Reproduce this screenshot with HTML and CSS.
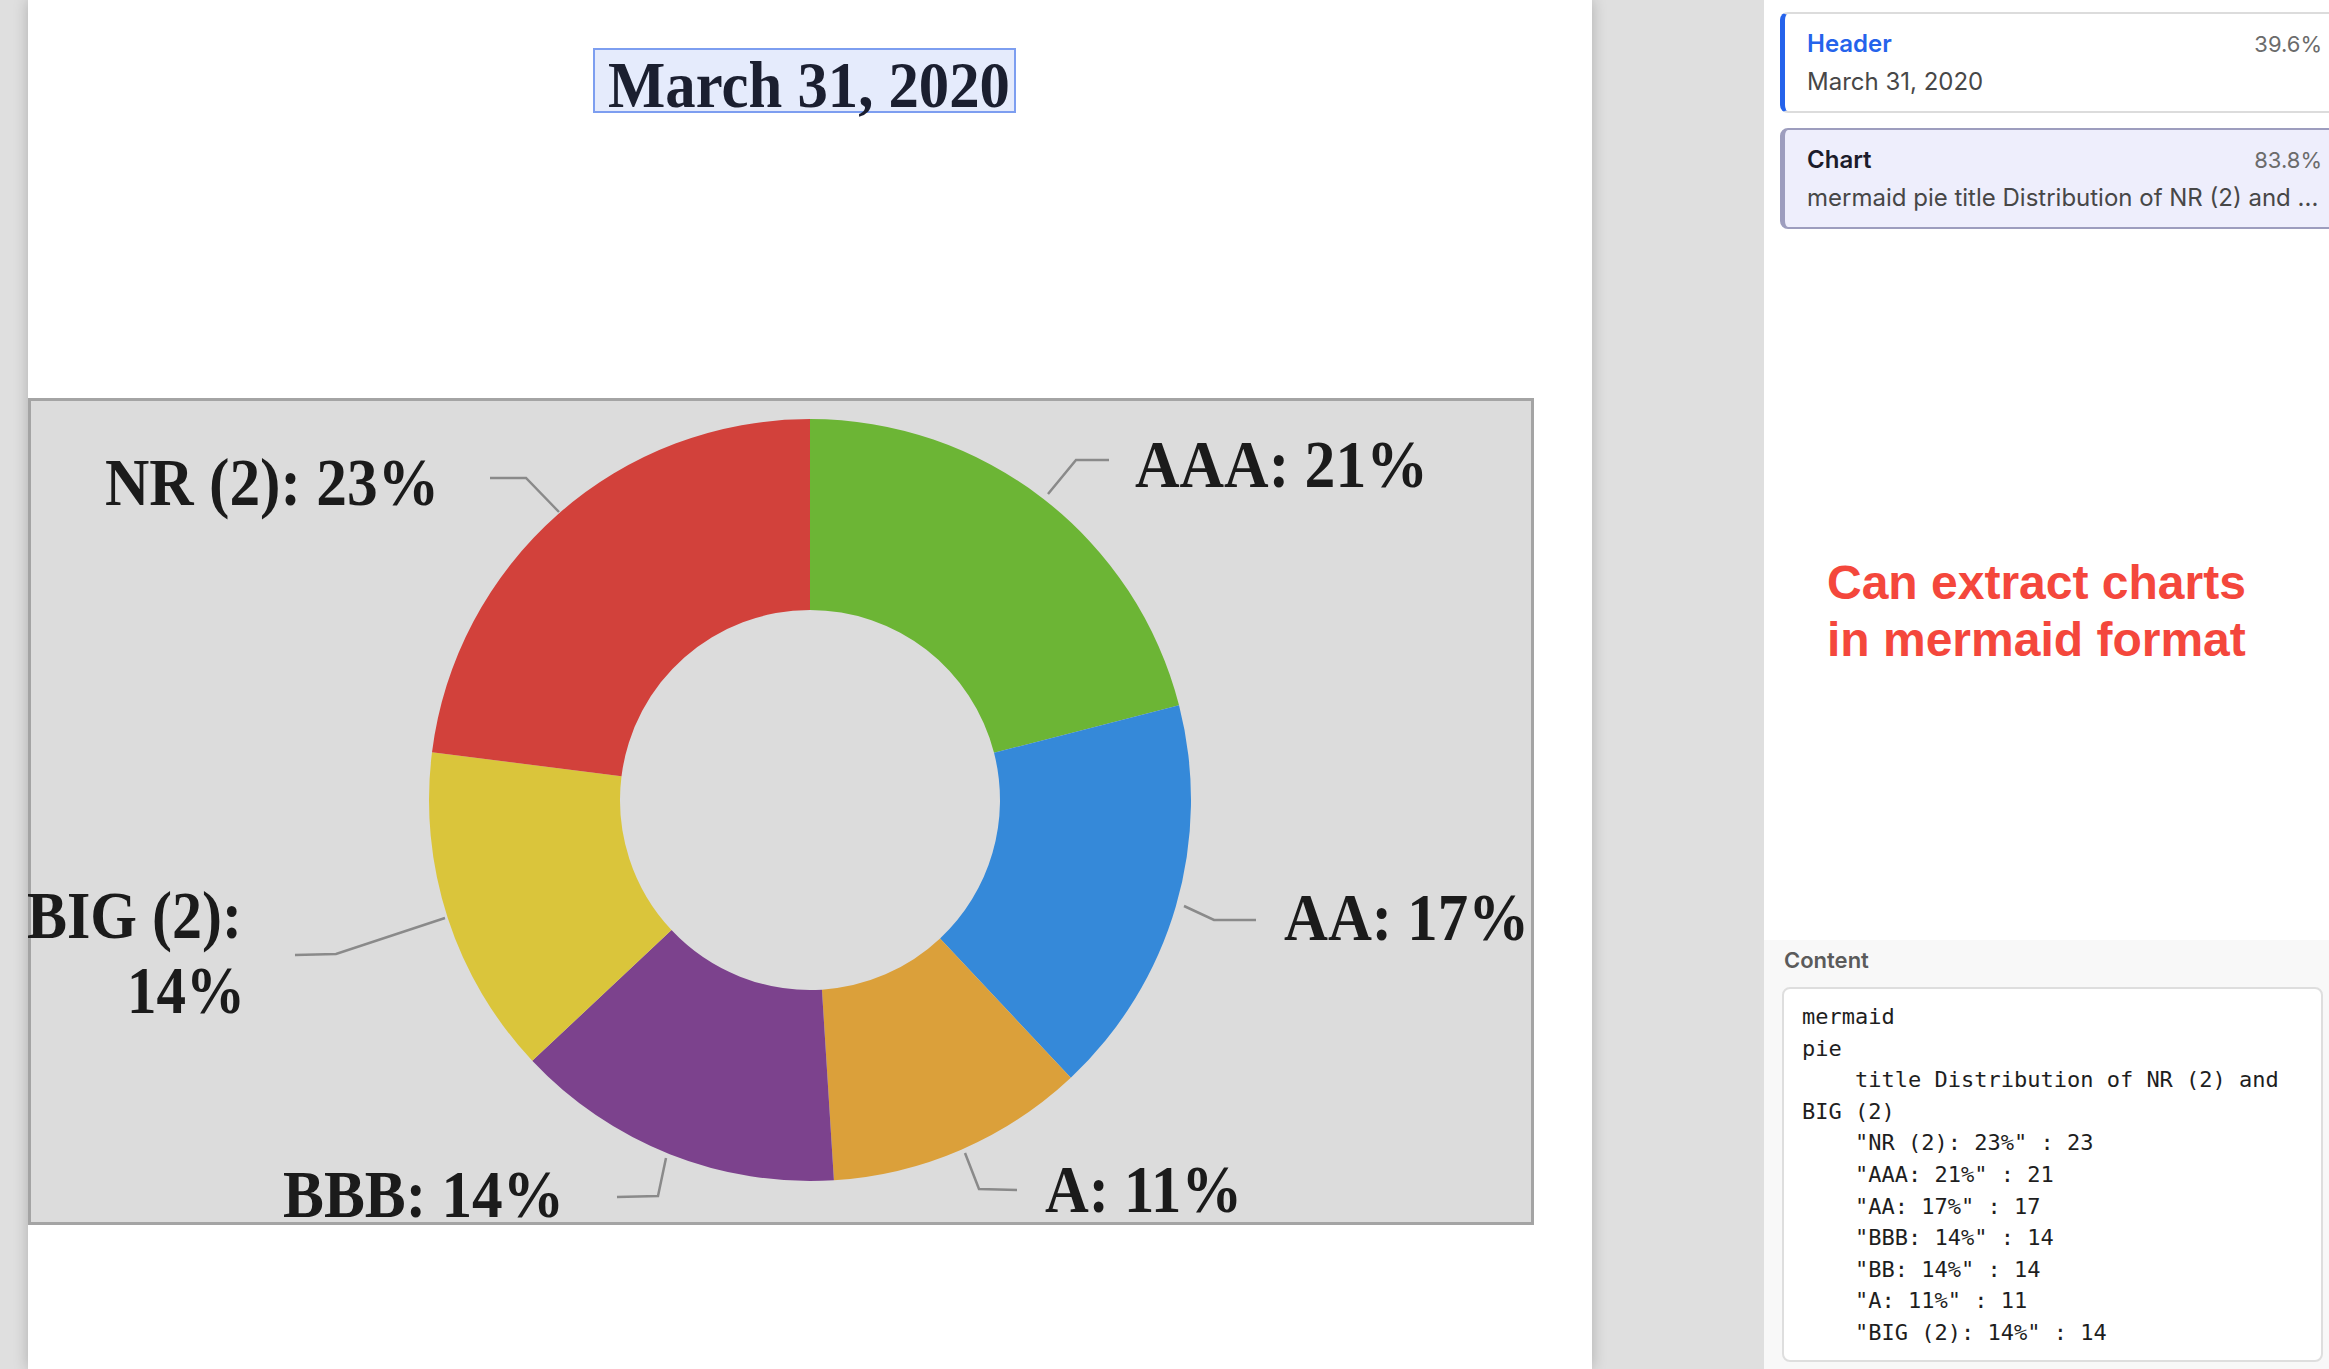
FILE: index.html
```html
<!DOCTYPE html>
<html lang="en">
<head>
  <meta charset="UTF-8">
  <title>Document blocks</title>
  <link rel="stylesheet" href="styles.css">
</head>
<body>

<div class="viewer">
  <div class="gutter"></div>

  <main class="page">
    <div class="title-row">
      <div class="title-box"><span class="scan-text">March 31, 2020</span></div>
    </div>

    <figure class="chart">
      <svg width="1506" height="827" viewBox="28 398 1506 827" xmlns="http://www.w3.org/2000/svg">
        <rect x="29.5" y="399.5" width="1503" height="824" fill="#dcdcdc" stroke="#a4a4a4" stroke-width="3"/>

        <!-- donut slices, clockwise from 12 o'clock -->
        <path fill="#6cb535" d="M810,419 A381,381 0 0 1 1179.03,705.25 L994.03,752.75 A190,190 0 0 0 810,610 Z"/>
        <path fill="#3589d9" d="M1179.03,705.25 A381,381 0 0 1 1070.81,1077.74 L940.06,938.5 A190,190 0 0 0 994.03,752.75 Z"/>
        <path fill="#dba03a" d="M1070.81,1077.74 A381,381 0 0 1 833.92,1180.25 L821.93,989.63 A190,190 0 0 0 940.06,938.5 Z"/>
        <path fill="#7c428d" d="M833.92,1180.25 A381,381 0 0 1 532.26,1060.81 L671.5,930.06 A190,190 0 0 0 821.93,989.63 Z"/>
        <path fill="#dac53b" d="M532.26,1060.81 A381,381 0 0 1 432.01,752.25 L621.5,776.19 A190,190 0 0 0 671.5,930.06 Z"/>
        <path fill="#d2413b" d="M432.01,752.25 A381,381 0 0 1 810,419 L810,610 A190,190 0 0 0 621.5,776.19 Z"/>

        <!-- leader lines -->
        <g fill="none" stroke="#8a8a8a" stroke-width="2.5">
          <polyline points="490,478 526,478 559,512"/>
          <polyline points="1109,460 1076,460 1048,494"/>
          <polyline points="1184,906 1214,920 1256,920"/>
          <polyline points="965,1153 979,1189 1017,1190"/>
          <polyline points="666,1158 658,1196 617,1197"/>
          <polyline points="445,918 336,954 295,955"/>
        </g>

        <g class="chart-label">
          <text x="105" y="505" textLength="334" lengthAdjust="spacingAndGlyphs">NR (2): 23%</text>
          <text x="1135" y="487" textLength="293" lengthAdjust="spacingAndGlyphs">AAA: 21%</text>
          <text x="1284" y="940" textLength="245" lengthAdjust="spacingAndGlyphs">AA: 17%</text>
          <text x="1045" y="1212" textLength="197" lengthAdjust="spacingAndGlyphs">A: 11%</text>
          <text x="283" y="1217" textLength="281" lengthAdjust="spacingAndGlyphs">BBB: 14%</text>
          <text x="27" y="938" textLength="215" lengthAdjust="spacingAndGlyphs">BIG (2):</text>
          <text x="127" y="1013" textLength="118" lengthAdjust="spacingAndGlyphs">14%</text>
        </g>
      </svg>
    </figure>
  </main>

  <div class="divider"></div>

  <aside class="panel">
    <div class="blocks">
      <div class="block block-header">
        <div class="block-head">
          <span class="block-type">Header</span>
          <span class="block-score">39.6%</span>
        </div>
        <div class="block-text">March 31, 2020</div>
      </div>
      <div class="block block-chart">
        <div class="block-head">
          <span class="block-type">Chart</span>
          <span class="block-score">83.8%</span>
        </div>
        <div class="block-text">mermaid pie title Distribution of NR (2) and ...</div>
      </div>
    </div>

    <p class="note">Can extract charts<br>in mermaid format</p>

    <section class="content">
      <h3>Content</h3>
<pre class="code">mermaid
pie
    title Distribution of NR (2) and BIG (2)
    "NR (2): 23%" : 23
    "AAA: 21%" : 21
    "AA: 17%" : 17
    "BBB: 14%" : 14
    "BB: 14%" : 14
    "A: 11%" : 11
    "BIG (2): 14%" : 14</pre>
    </section>
  </aside>
</div>

</body>
</html>
```

FILE: styles.css
```css
* { box-sizing: border-box; }
body { margin: 0; width: 2329px; height: 1369px; overflow: hidden; background: #dfdfdf; font-family: Inter, "Noto Sans", sans-serif; }

.viewer { display: flex; height: 1369px; }
.gutter { width: 28px; flex: none; background: #dfdfdf; }
.divider { width: 172px; flex: none; background: #dfdfdf; }

/* document page */
.page { width: 1564px; flex: none; background: #fff; box-shadow: 0 0 14px rgba(0,0,0,0.22); position: relative; z-index: 1; }
.title-row { display: flex; justify-content: center; padding: 48px 11px 0 0; }
.title-box { width: 423px; height: 65px; border: 2px solid #7d9ef0; background: #e5ebfc; padding: 7px 0 0 13px; font: bold 66px/56px "Liberation Serif", "Times New Roman", serif; color: #1b1f30; white-space: nowrap; }
.scan-text { display: inline-block; transform: scaleX(0.92); transform-origin: left center; filter: blur(0.7px); }

.chart { margin: 285px 0 0; width: 1506px; height: 827px; }
.chart svg { display: block; overflow: visible; filter: blur(0.7px); }
.chart-label { font: bold 67px "Liberation Serif", "Times New Roman", serif; fill: #1b1b1b; }

/* side panel */
.panel { width: 565px; flex: none; background: #fff; display: flex; flex-direction: column; overflow: hidden; }
.blocks { padding: 12px 0 0 16px; margin-right: -11px; display: flex; flex-direction: column; gap: 15px; }
.block { border: 2px solid #dcdcdc; border-left-width: 5px; border-radius: 8px; padding: 12px 16px 11px 22px; background: #fff; }
.block-header { border-left-color: #2563eb; }
.block-chart { border-color: #9d9dbe; background: #eeeefc; }
.block-head { display: flex; justify-content: space-between; align-items: baseline; line-height: 36px; }
.block-type { font-size: 24px; font-weight: 600; color: #1c1c2b; }
.block-header .block-type { color: #2563eb; }
.block-score { font-size: 22px; color: #6b6b6b; }
.block-text { margin-top: 2px; font-size: 24px; line-height: 36px; color: #474747; white-space: nowrap; overflow: hidden; }

.note { margin: 325px 0 0; padding-left: 63px; font: bold 48px/57px "Liberation Sans", Arial, sans-serif; color: #f4473c; }

.content { margin-top: auto; height: 429px; background: #f8f8f8; padding: 5px 6px 7px 18px; display: flex; flex-direction: column; }
.content h3 { margin: 0 0 12px 2px; font-size: 22px; font-weight: 600; line-height: 30px; color: #5b5b5b; }
.code { flex: 1; margin: 0; background: #fff; border: 2px solid #dedede; border-radius: 8px; padding: 12px 18px 9px; font: 22px/31.6px "DejaVu Sans Mono", monospace; color: #1e1e1e; white-space: pre-wrap; overflow: hidden; }
```
